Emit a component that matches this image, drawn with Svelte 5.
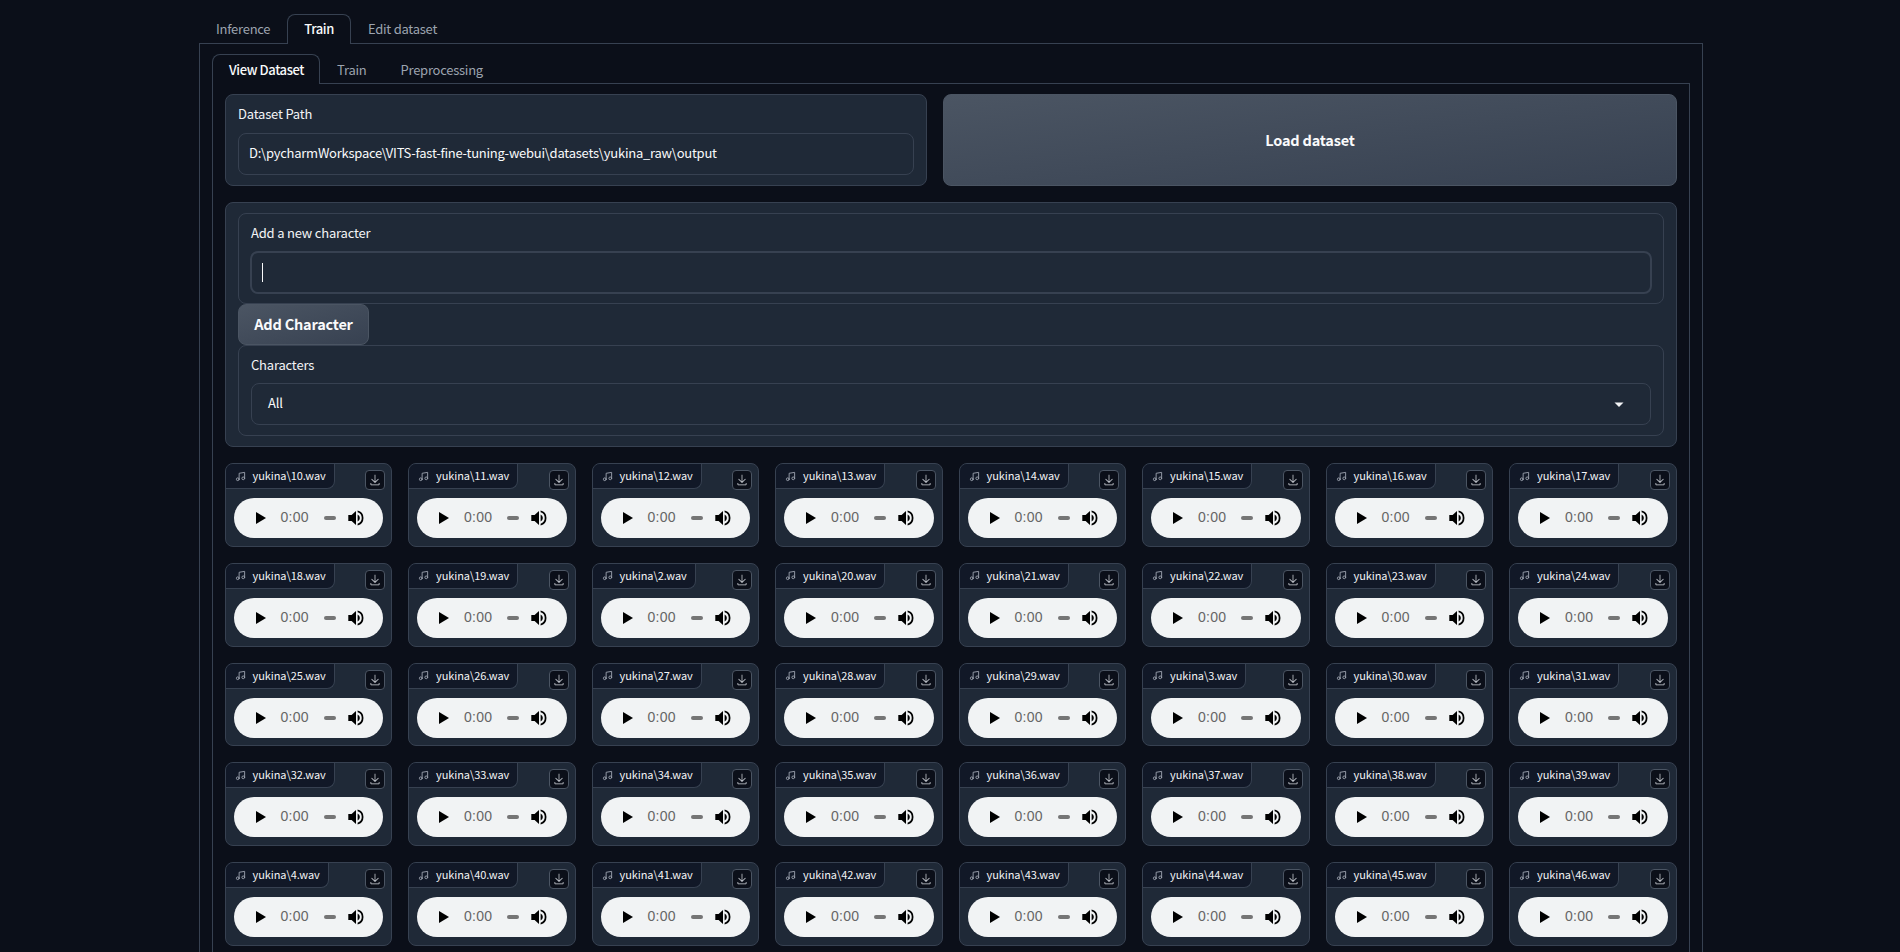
<script>
  const rows = [
    ['10','11','12','13','14','15','16','17'],
    ['18','19','2','20','21','22','23','24'],
    ['25','26','27','28','29','3','30','31'],
    ['32','33','34','35','36','37','38','39'],
    ['4','40','41','42','43','44','45','46']
  ];
  const names = rows.flat();
</script>

<div class="page">
  <div class="tabs outer">
    <button class="tab">Inference</button>
    <button class="tab active">Train</button>
    <button class="tab">Edit dataset</button>
  </div>
  <div class="panel outer-panel">
    <div class="tabs innertabs">
      <button class="tab active">View Dataset</button>
      <button class="tab">Train</button>
      <button class="tab">Preprocessing</button>
    </div>
    <div class="panel inner-panel">
      <div class="top">
        <div class="block path">
          <div class="label">Dataset Path</div>
          <div class="input pathval">D:\pycharmWorkspace\VITS-fast-fine-tuning-webui\datasets\yukina_raw\output</div>
        </div>
        <button class="btn load">Load dataset</button>
      </div>
      <div class="block group">
        <div class="sub">
          <div class="label">Add a new character</div>
          <div class="input focus"><span class="caret"></span></div>
        </div>
        <button class="btn add">Add Character</button>
        <div class="sub chars">
          <div class="label">Characters</div>
          <div class="input select">All
            <svg class="arrow" width="10" height="5" viewBox="0 0 10 5"><path d="M0.5 0.5h9L5 5z" fill="#f3f4f6"/></svg>
          </div>
        </div>
      </div>
      <div class="grid">
        {#each names as n}
          <div class="card">
            <div class="name">
              <svg class="note" width="11" height="11" viewBox="0 0 24 24" fill="none" stroke="#9ca3af" stroke-width="2" stroke-linecap="round" stroke-linejoin="round"><path d="M9 18V5l12-2v13"/><circle cx="6" cy="18" r="3"/><circle cx="18" cy="16" r="3"/></svg>
              <span>yukina\{n}.wav</span>
            </div>
            <div class="dl">
              <svg width="12" height="12" viewBox="0 0 32 32" fill="#d1d5db"><path d="M26 24v4H6v-4H4v4a2 2 0 0 0 2 2h20a2 2 0 0 0 2-2v-4z"/><path d="M26 14l-1.41-1.41L17 20.17V2h-2v18.17l-7.59-7.58L6 14l10 10z"/></svg>
            </div>
            <div class="player">
              <svg class="play" width="10" height="12" viewBox="0 0 10 12"><path d="M0 0L10 6L0 12z" fill="#000"/></svg>
              <span class="time">0:00</span>
              <span class="bar"></span>
              <svg class="vol" width="16" height="16" viewBox="0 0 16 16"><path d="M0.3 5H3.6L8 1V15L3.6 11H0.3z" fill="#000"/><path d="M9.6 4.4a4 4 0 0 1 0 7.2z" fill="#000"/><path d="M9.6 0.6a7.6 7.6 0 0 1 0 14.8v-1.7a6 6 0 0 0 0-11.4z" fill="#000"/></svg>
            </div>
          </div>
        {/each}
      </div>
    </div>
  </div>
</div>

<style>
  :global(body) {
    margin: 0;
    background: #0b0f19;
    height: 952px;
    overflow: hidden;
  }
  .page {
    width: 1504px;
    margin-left: 199px;
    padding-top: 14px;
    box-sizing: border-box;
    font-family: "Noto Sans CJK SC", "Noto Sans", sans-serif;
    font-size: 13px;
    letter-spacing: -0.19px;
    color: #f3f4f6;
  }
  button {
    font: inherit;
    letter-spacing: inherit;
    background: none;
    margin: 0;
    cursor: pointer;
  }
  .tabs {
    display: flex;
    height: 29px;
    position: relative;
    z-index: 1;
  }
  .tab {
    height: 30px;
    padding: 0 16px 2px;
    border: 1px solid transparent;
    border-bottom: 0;
    border-radius: 8px 8px 0 0;
    color: #9ca3af;
    white-space: nowrap;
    letter-spacing: -0.25px;
  }
  .tab.active {
    background: #0b0f19;
    border-color: #374151;
    color: #f9fafb;
    font-weight: 500;
    letter-spacing: -0.39px;
  }
  .panel {
    border: 1px solid #374151;
    box-sizing: border-box;
  }
  .outer-panel {
    height: 1000px;
    padding: 10px 12px;
  }
  .innertabs {
    height: 29px;
  }
  .innertabs .tab {
    padding-bottom: 1px;
  }
  .innertabs .tab.active {
    padding-right: 15px;
  }
  .inner-panel {
    padding: 10px 12px 12px;
    height: 960px;
  }
  .top {
    display: flex;
    gap: 16px;
    height: 92px;
  }
  .block {
    background: #1f2937;
    border: 1px solid #374151;
    border-radius: 8px;
    box-sizing: border-box;
  }
  .path {
    width: 702px;
    padding: 10px 12px;
  }
  .label {
    line-height: 18px;
    color: #f3f4f6;
    margin-bottom: 10px;
  }
  .input {
    box-sizing: border-box;
    height: 42px;
    border: 1px solid #374151;
    border-radius: 8px;
    padding: 0 10px;
    line-height: 38px;
    color: #f9fafb;
    white-space: nowrap;
    position: relative;
  }
  .pathval {
    letter-spacing: -0.24px;
  }
  .btn {
    border: 1px solid #4b5563;
    border-radius: 8px;
    background: linear-gradient(to bottom right, #4b5563, #374151);
    color: #f9fafb;
    font-weight: 600;
    padding: 0 0 2px;
  }
  .load {
    flex: 1;
    font-size: 14.5px;
    letter-spacing: -0.2px;
  }
  .group {
    margin-top: 16px;
    height: 245px;
    padding: 10px 12px;
  }
  .sub {
    border: 1px solid #374151;
    border-radius: 8px;
    padding: 10px 12px;
    box-sizing: border-box;
    height: 91px;
  }
  .label + .focus {
    height: 43px;
    margin: -1px -1px 0;
    border: 2px solid #374151;
  }
  .caret {
    position: absolute;
    left: 10px;
    top: 10px;
    width: 1px;
    height: 19px;
    background: #f9fafb;
  }
  .add {
    display: block;
    width: 131px;
    height: 41px;
    font-size: 14.5px;
    letter-spacing: -0.2px;
    position: relative;
  }
  .chars .label {
    margin-bottom: 9px;
  }
  .select {
    padding: 0 16px;
    line-height: 38px;
  }
  .arrow {
    position: absolute;
    right: 26px;
    top: 18px;
  }
  .grid {
    display: grid;
    grid-template-columns: repeat(8, 1fr);
    gap: 16px;
    margin: 16px 0.4px 0 -0.4px;
  }
  .card {
    position: relative;
    height: 83.8px;
    box-sizing: border-box;
    background: #1f2937;
    border: 1px solid #374151;
    border-radius: 8px;
  }
  .name {
    display: inline-flex;
    align-items: center;
    height: 25px;
    box-sizing: border-box;
    padding: 0 8px 2px 9px;
    background: #111827;
    border-right: 1px solid #374151;
    border-bottom: 1px solid #374151;
    border-radius: 7px 0 8px 0;
    font-size: 11px;
    letter-spacing: -0.1px;
    color: #f3f4f6;
    white-space: nowrap;
    vertical-align: top;
  }
  .note {
    margin-right: 7px;
    margin-top: 2px;
  }
  .dl {
    position: absolute;
    top: 6px;
    right: 6px;
    width: 20px;
    height: 20px;
    box-sizing: border-box;
    border: 1px solid #4b5563;
    border-radius: 4px;
    background: #0b0f19;
    display: flex;
    align-items: center;
    justify-content: center;
  }
  .player {
    position: absolute;
    left: 8px;
    top: 34px;
    width: 149.5px;
    height: 40px;
    background: #f1f3f4;
    border-radius: 20px;
  }
  .play {
    position: absolute;
    left: 22px;
    top: 14px;
  }
  .time {
    position: absolute;
    left: 47px;
    top: 10px;
    font-family: "Liberation Sans", sans-serif;
    font-size: 14px;
    line-height: 18px;
    letter-spacing: 0.2px;
    color: #666;
  }
  .bar {
    position: absolute;
    left: 90px;
    top: 18px;
    width: 12px;
    height: 4px;
    border-radius: 2px;
    background: #757575;
  }
  .vol {
    position: absolute;
    left: 114px;
    top: 12px;
  }
</style>
